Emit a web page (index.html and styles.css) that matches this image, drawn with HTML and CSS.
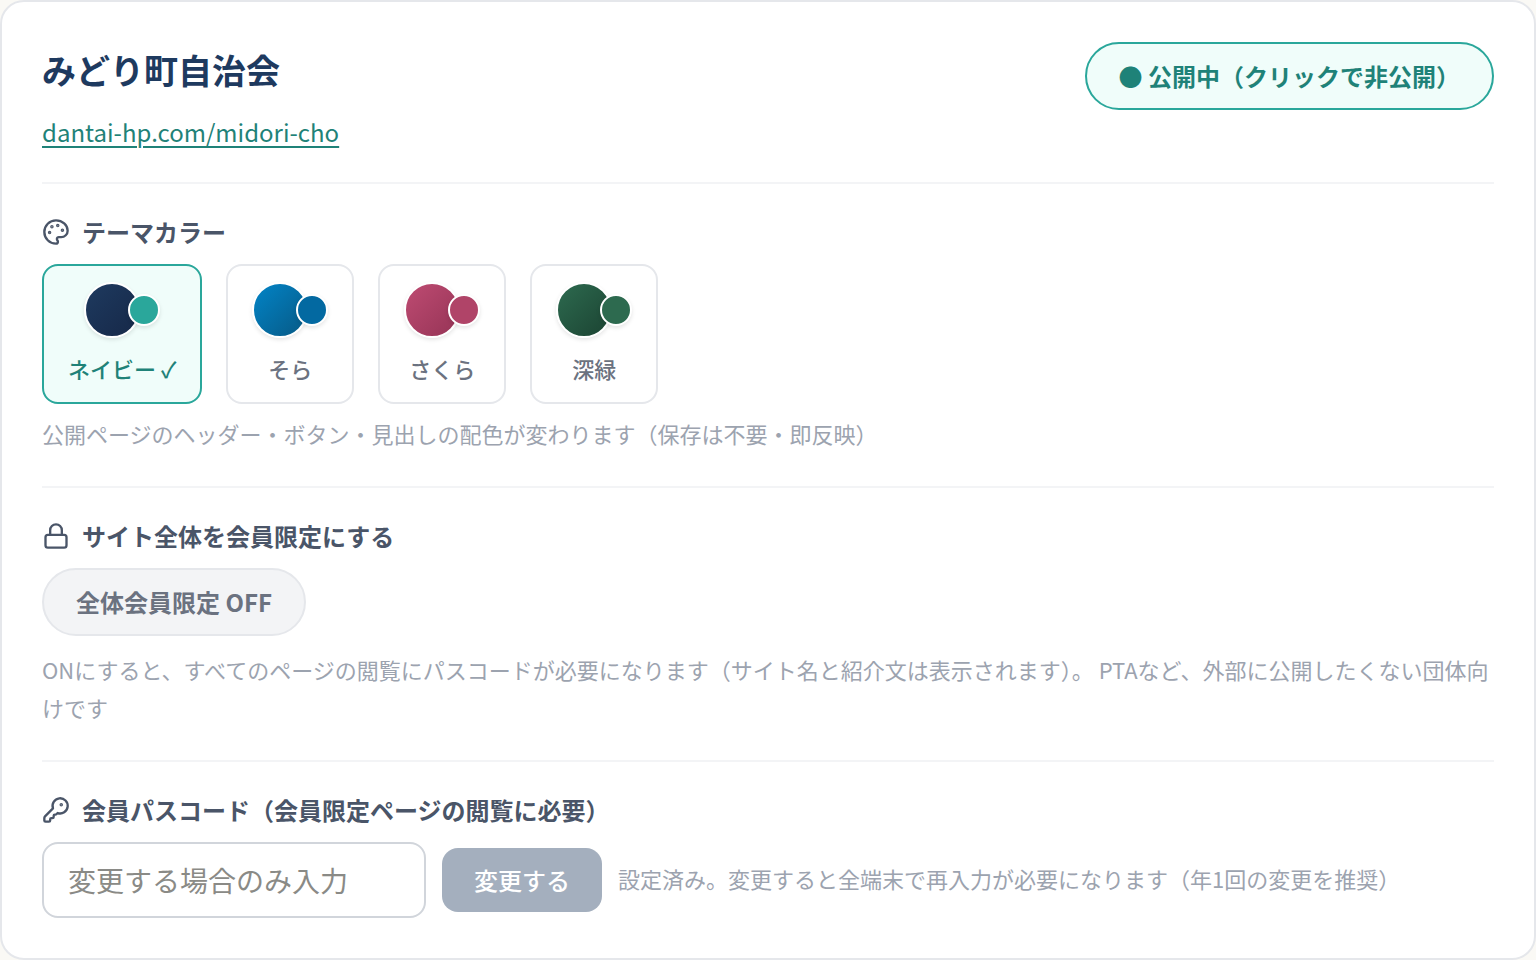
FILE: index.html
```html
<!DOCTYPE html>
<html lang="ja">
  <head>
    <meta charset="UTF-8" />
    <meta name="viewport" content="width=device-width, initial-scale=1.0" />
    <title>みどり町自治会</title>
    <link rel="stylesheet" href="styles.css">
  </head>
  <body>
    <main class="card">
      <header class="site-header">
        <div>
          <h1>みどり町自治会</h1>
          <a class="site-link" href="#">dantai-hp.com/midori-cho</a>
        </div>
        <button type="button" class="pill pill-on">● 公開中（クリックで非公開）</button>
      </header>

      <section class="section">
        <h2 class="section-title">
          <svg class="icon" viewBox="0 0 24 24" aria-hidden="true">
            <circle cx="13.5" cy="6.5" r=".5" fill="currentColor" />
            <circle cx="17.5" cy="10.5" r=".5" fill="currentColor" />
            <circle cx="8.5" cy="7.5" r=".5" fill="currentColor" />
            <circle cx="6.5" cy="12.5" r=".5" fill="currentColor" />
            <path d="M12 2C6.5 2 2 6.5 2 12s4.5 10 10 10c.926 0 1.648-.746 1.648-1.688 0-.437-.18-.835-.437-1.125-.29-.289-.438-.652-.438-1.125a1.64 1.64 0 0 1 1.668-1.668h1.996c3.051 0 5.555-2.503 5.555-5.554C21.965 6.012 17.461 2 12 2z" />
          </svg>
          テーマカラー
        </h2>
        <div class="themes">
          <button type="button" class="theme selected">
            <span class="swatch">
              <span class="dot navy"></span><span class="dot-sub navy-sub"></span>
            </span>
            ネイビー ✓
          </button>
          <button type="button" class="theme">
            <span class="swatch">
              <span class="dot sora"></span><span class="dot-sub sora-sub"></span>
            </span>
            そら
          </button>
          <button type="button" class="theme">
            <span class="swatch">
              <span class="dot sakura"></span><span class="dot-sub sakura-sub"></span>
            </span>
            さくら
          </button>
          <button type="button" class="theme">
            <span class="swatch">
              <span class="dot green"></span><span class="dot-sub green-sub"></span>
            </span>
            深緑
          </button>
        </div>
        <p class="hint">公開ページのヘッダー・ボタン・見出しの配色が変わります（保存は不要・即反映）</p>
      </section>

      <section class="section">
        <h2 class="section-title">
          <svg class="icon" viewBox="0 0 24 24" aria-hidden="true">
            <rect x="3" y="11" width="18" height="11" rx="2" />
            <path d="M7 11V7a5 5 0 0 1 10 0v4" />
          </svg>
          サイト全体を会員限定にする
        </h2>
        <button type="button" class="pill">全体会員限定 OFF</button>
        <p class="hint hint-pill">ONにすると、すべてのページの閲覧にパスコードが必要になります（サイト名と紹介文は表示されます）。 PTAなど、外部に公開したくない団体向けです</p>
      </section>

      <section class="section">
        <h2 class="section-title">
          <svg class="icon" viewBox="0 0 24 24" aria-hidden="true">
            <path d="M2.586 17.414A2 2 0 0 0 2 18.828V21a1 1 0 0 0 1 1h3a1 1 0 0 0 1-1v-1a1 1 0 0 1 1-1h1a1 1 0 0 0 1-1v-1a1 1 0 0 1 1-1h.172a2 2 0 0 0 1.414-.586l.814-.814a6.5 6.5 0 1 0-4-4z" />
            <circle cx="16.5" cy="7.5" r=".5" fill="currentColor" />
          </svg>
          <label for="passcode">会員パスコード（会員限定ページの閲覧に必要）</label>
        </h2>
        <form class="passcode-form">
          <input type="text" id="passcode" placeholder="変更する場合のみ入力" />
          <button type="submit" class="submit" disabled>変更する</button>
          <span class="note">設定済み。変更すると全端末で再入力が必要になります（年1回の変更を推奨）</span>
        </form>
      </section>
    </main>
  </body>
</html>
```
FILE: styles.css
```css
* {
  box-sizing: border-box;
}

body {
  margin: 0;
  background-color: #faf9f5;
  font-family: "Noto Sans CJK JP", sans-serif;
}

h1,
h2,
p {
  margin: 0;
}

button,
input {
  font-family: inherit;
}

button {
  cursor: pointer;
}

.card {
  padding: 40px;
  background-color: white;
  border: 2px solid #e5e7eb;
  border-radius: 24px;
}

.site-header {
  display: flex;
  justify-content: space-between;
  align-items: flex-start;
  padding-bottom: 30px;
}

h1 {
  font-size: 34px;
  line-height: 56px;
  color: #1e3a5f;
}

.site-link {
  display: block;
  margin-top: 14px;
  font-size: 24px;
  line-height: 40px;
  color: #1f8278;
  text-decoration-thickness: 2px;
  text-underline-offset: 4px;
}

.pill {
  display: block;
  padding: 14px 32px;
  font-size: 24px;
  font-weight: 700;
  line-height: 36px;
  color: #6b7280;
  background-color: #f3f4f6;
  border: 2px solid #e5e7eb;
  border-radius: 34px;
}

.pill-on {
  color: #1f8278;
  background-color: #f0fdfa;
  border-color: #2aa79b;
}

.section {
  padding: 28px 0 34px;
  border-top: 2px solid #f3f4f6;
}

.section:last-child {
  padding-bottom: 0;
}

.section-title {
  display: flex;
  align-items: center;
  gap: 12px;
  margin-bottom: 12px;
  font-size: 24px;
  line-height: 40px;
  color: #4a5568;
}

.icon {
  width: 28px;
  height: 28px;
  fill: none;
  stroke: currentColor;
  stroke-width: 2;
  stroke-linecap: round;
  stroke-linejoin: round;
}

.themes {
  display: flex;
  flex-wrap: wrap;
  gap: 24px;
}

.theme {
  display: flex;
  flex-direction: column;
  align-items: center;
  gap: 14px;
  padding: 16px 24px 18px;
  font-size: 22px;
  font-weight: 500;
  line-height: 32px;
  color: #6b7280;
  background-color: white;
  border: 2px solid #e5e7eb;
  border-radius: 16px;
}

.theme.selected {
  color: #1f8278;
  background-color: #f0fdfa;
  border-color: #2aa79b;
}

.swatch {
  display: flex;
  align-items: center;
}

.dot,
.dot-sub {
  border: 2px solid white;
  border-radius: 50%;
  box-shadow: 0 2px 4px rgba(0, 0, 0, 0.1);
}

.dot {
  width: 56px;
  height: 56px;
}

.dot-sub {
  width: 32px;
  height: 32px;
  margin-left: -12px;
}

.navy {
  background: linear-gradient(135deg, #1e3a5f, #162848);
}

.navy-sub {
  background: #2aa79b;
}

.sora {
  background: linear-gradient(135deg, #0284c7, #075985);
}

.sora-sub {
  background: #0369a1;
}

.sakura {
  background: linear-gradient(135deg, #be4b72, #963456);
}

.sakura-sub {
  background: #b04468;
}

.green {
  background: linear-gradient(135deg, #2d6a4f, #1b4332);
}

.green-sub {
  background: #2d6a4f;
}

.hint,
.note {
  font-size: 22px;
  line-height: 38px;
  color: #9ca3af;
}

.hint {
  margin-top: 10px;
}

.hint-pill {
  margin-top: 14px;
}

.note {
  padding-bottom: 4px;
}

.passcode-form {
  display: flex;
  flex-wrap: wrap;
  align-items: center;
  gap: 16px;
}

input {
  width: 384px;
  height: 76px;
  padding: 0 24px;
  font-size: 28px;
  background-color: white;
  border: 2px solid #d1d5db;
  border-radius: 16px;
}

input::placeholder {
  color: #8a8a86;
}

.submit {
  padding: 14px 32px;
  font-size: 24px;
  font-weight: 500;
  line-height: 36px;
  color: white;
  background-color: #1e3a5f;
  border: none;
  border-radius: 16px;
}

.submit:disabled {
  opacity: 0.4;
  cursor: default;
}
```
